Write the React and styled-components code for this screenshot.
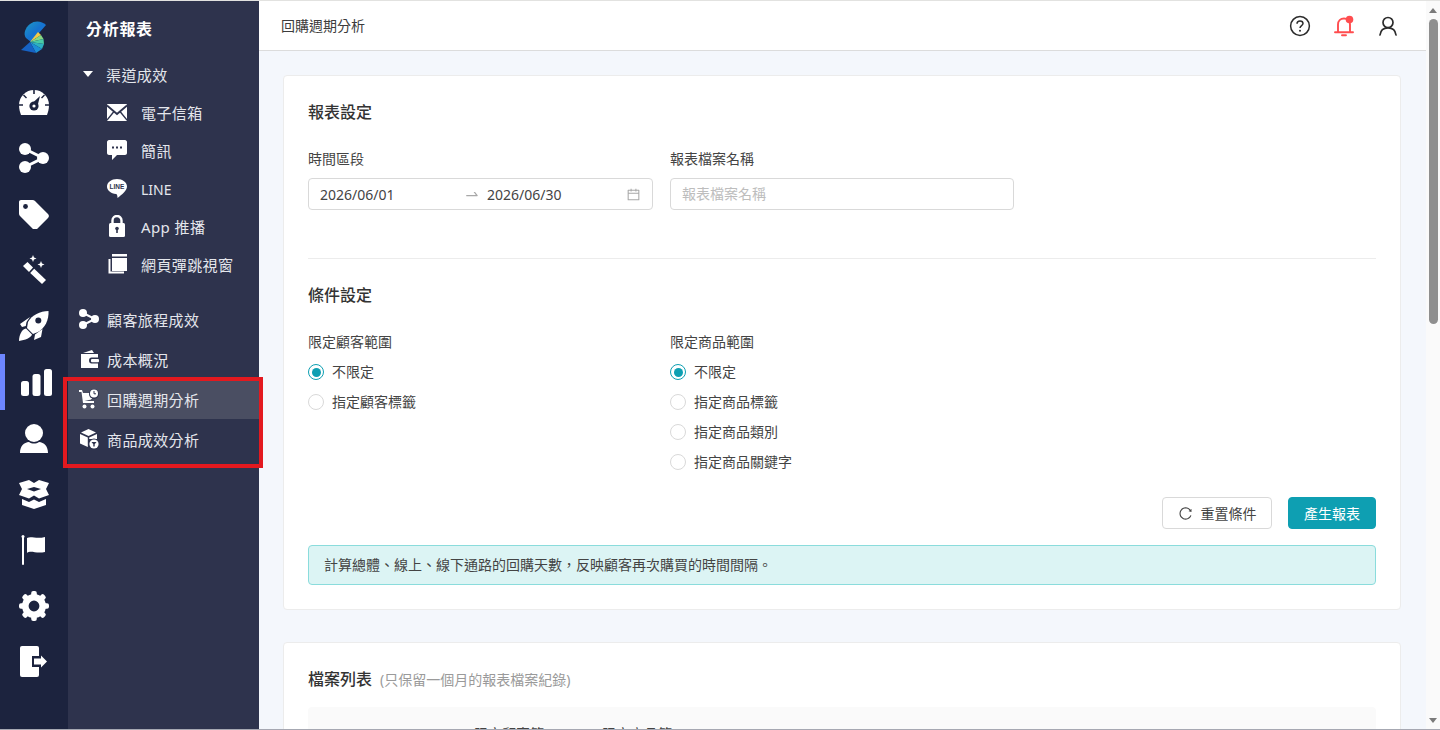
import React from "react";
import styled, { createGlobalStyle } from "styled-components";
import { AiOutlineCalendar, AiOutlineReload, AiOutlineSwapRight } from "react-icons/ai";

const GlobalStyle = createGlobalStyle`
  html, body {
    margin: 0;
    padding: 0;
    height: 100%;
    overflow: hidden;
    background: #fff;
  }
  * { box-sizing: border-box; }
  body {
    font-family: "Noto Sans", "Noto Sans CJK TC", sans-serif;
    font-size: 14px;
    color: #3c3c3c;
  }
`;

const Page = styled.div`
  height: 730px;
  display: flex;
  flex-direction: column;
  overflow: hidden;
  position: relative;
  border-top: 1px solid #e2e2e0;
  border-bottom: 1px solid #a6a8b2;
`;

const Shell = styled.div`
  flex: 1;
  min-height: 0;
  display: flex;
`;

const Rail = styled.nav`
  width: 68px;
  flex: none;
  background: #1c233e;
  display: flex;
  flex-direction: column;
  align-items: center;
  padding-top: 19px;
`;

const LogoBox = styled.div`
  height: 35px;
  margin-bottom: 19px;
  display: flex;
`;

const RailItem = styled.a`
  width: 100%;
  height: 56px;
  flex: none;
  display: flex;
  align-items: center;
  justify-content: center;
  color: #fff;
  border-left: 5px solid ${(p) => (p.$active ? "#6d86ff" : "transparent")};
  padding-right: ${(p) => (p.$active ? 0 : 5)}px;
`;

const SubNav = styled.aside`
  width: 191px;
  flex: none;
  background: #2e334d;
  color: #e4e6ec;
  font-size: 15px;
  letter-spacing: 0.4px;
`;

const SubTitle = styled.h2`
  margin: 0;
  height: 54px;
  padding-left: 18px;
  display: flex;
  align-items: center;
  color: #fff;
  font-size: 16px;
  font-weight: 700;
  letter-spacing: 0.7px;
`;

const GroupRow = styled.div`
  height: 36px;
  margin: 1px 0;
  display: flex;
  align-items: center;
  padding-left: 15px;
  gap: 13px;
`;

const Caret = styled.span`
  width: 0;
  height: 0;
  border-left: 5.5px solid transparent;
  border-right: 5.5px solid transparent;
  border-top: 6px solid #fff;
`;

const ChildList = styled.div`
  display: flex;
  flex-direction: column;
  margin-bottom: 16px;
`;

const ChildRow = styled.a`
  height: 38px;
  display: flex;
  align-items: center;
  padding-left: 39px;
  gap: 14px;
`;

const LatinLabel = styled.span`
  font-size: 14px;
  letter-spacing: 0;
  padding-top: 3px;
`;

const IconSlot = styled.span`
  width: 20px;
  flex: none;
  display: flex;
  align-items: center;
  justify-content: center;
  color: #fff;
`;

const NavRow = styled.a`
  height: 40px;
  display: flex;
  align-items: center;
  padding-left: 11px;
  gap: 8px;
  background: ${(p) => (p.$active ? "#4a4e62" : "transparent")};
`;

const Highlight = styled.div`
  position: absolute;
  left: 63px;
  top: 376px;
  width: 200px;
  height: 91px;
  border: 4px solid #e3191f;
  pointer-events: none;
`;

const Main = styled.main`
  flex: 1;
  min-width: 0;
  display: flex;
  flex-direction: column;
`;

const TopBar = styled.header`
  height: 50px;
  flex: none;
  background: #fff;
  border-bottom: 1px solid #dcdcdc;
  display: flex;
  align-items: center;
  justify-content: space-between;
  padding: 0 27px 0 22px;
  font-size: 14px;
  color: #3c3c3c;
`;

const TopTitle = styled.span`
  padding-bottom: 2px;
`;

const TopIcons = styled.div`
  display: flex;
  align-items: center;
  gap: 22px;
`;

const Content = styled.div`
  flex: 1;
  min-height: 0;
  overflow: hidden;
  background: #f4f7fc;
  padding: 24px 25px 0 24px;
  display: flex;
  flex-direction: column;
  gap: 32px;
`;

const Card = styled.section`
  flex: none;
  background: #fff;
  border: 1px solid #ececec;
  border-radius: 4px;
  padding: 24px;
`;

const SectionTitle = styled.h3`
  margin: 0;
  height: 26px;
  line-height: 24px;
  font-size: 16px;
  font-weight: 500;
  color: #333;
`;

const Hint = styled.span`
  margin-left: 8px;
  font-size: 14px;
  font-weight: 400;
  color: #9a9a9a;
`;

const FieldGrid = styled.div`
  display: grid;
  grid-template-columns: 345px 344px;
  column-gap: 17px;
  margin-top: 22px;
`;

const FieldLabel = styled.div`
  height: 22px;
  line-height: 22px;
  color: #444;
`;

const InputShell = styled.div`
  height: 32px;
  margin-top: 8px;
  border: 1px solid #d9d9d9;
  border-radius: 4px;
  background: #fff;
  display: flex;
  align-items: center;
  padding: 0 11px ${(p) => (p.$placeholder ? 2 : 0)}px;
  color: ${(p) => (p.$placeholder ? "#bdbdbd" : "#444")};
`;

const DatePart = styled.span`
  width: 144px;
`;

const DateArrow = styled.span`
  width: 22px;
  display: flex;
  align-items: center;
  color: #a8a8a8;
`;

const DateEnd = styled.span`
  flex: 1;
  padding-left: 1px;
`;

const Divider = styled.hr`
  margin: 48px 0 24px;
  border: 0;
  border-top: 1px solid #ececec;
`;

const RadioGroup = styled.div`
  margin-top: 4px;
  display: flex;
  flex-direction: column;
`;

const RadioRow = styled.label`
  height: 30px;
  display: flex;
  align-items: center;
  gap: 8px;
  color: #444;
`;

const RadioText = styled.span`
  padding-bottom: 2px;
`;

const RadioDot = styled.span`
  width: 16px;
  height: 16px;
  border-radius: 50%;
  border: 1px solid ${(p) => (p.$checked ? "#0e9fb2" : "#d9d9d9")};
  display: flex;
  align-items: center;
  justify-content: center;
  &::after {
    content: "";
    width: 9px;
    height: 9px;
    border-radius: 50%;
    background: ${(p) => (p.$checked ? "#0e9fb2" : "transparent")};
  }
`;

const ButtonRow = styled.div`
  margin-top: 20px;
  display: flex;
  justify-content: flex-end;
  gap: 16px;
`;

const Button = styled.button`
  height: 32px;
  width: ${(p) => (p.$primary ? 88 : 110)}px;
  border-radius: 4px;
  border: 1px solid ${(p) => (p.$primary ? "#0e9fb2" : "#d9d9d9")};
  background: ${(p) => (p.$primary ? "#0e9fb2" : "#fff")};
  color: ${(p) => (p.$primary ? "#fff" : "#444")};
  font: inherit;
  display: flex;
  align-items: center;
  justify-content: center;
  gap: 8px;
  padding: 0;
`;

const Notice = styled.div`
  margin-top: 16px;
  height: 40px;
  background: #dcf4f4;
  border: 1px solid #8adcdc;
  border-radius: 4px;
  display: flex;
  align-items: center;
  padding: 0 15px 2px;
  font-size: 14px;
  color: #444;
`;

const TableHead = styled.div`
  margin-top: 14px;
  background: #fafafa;
  border-radius: 4px 4px 0 0;
  display: grid;
  grid-template-columns: 166px 128px 1fr;
  padding-top: 16px;
  height: 60px;
  color: #444;
`;

const HeadCell = styled.span`
  max-width: 72px;
`;

const Scrollbar = styled.div`
  width: 14px;
  flex: none;
  background: #fafafa;
  display: flex;
  flex-direction: column;
  align-items: center;
`;

const ScrollArrow = styled.span`
  height: 18px;
  flex: none;
  display: flex;
  align-items: center;
  &::after {
    content: "";
    width: 0;
    height: 0;
    border-left: 4.5px solid transparent;
    border-right: 4.5px solid transparent;
    ${(p) =>
      p.$down
        ? "border-top: 5px solid #7a7a7a;"
        : "border-bottom: 5px solid #7a7a7a;"}
  }
`;

const ScrollThumb = styled.span`
  width: 9px;
  height: 305px;
  border-radius: 5px;
  background: #8f8f8f;
`;

const ScrollSpace = styled.span`
  flex: 1;
`;

const DARK = "#1c233e";
const MID = "#2e334d";

const LogoMark = () => (
  <svg width="26" height="35" viewBox="24 20 26 35">
    <defs>
      <linearGradient id="lg" x1="0" y1="0" x2="1" y2="1">
        <stop offset="0" stopColor="#1f9ac4" />
        <stop offset="0.5" stopColor="#1572d0" />
        <stop offset="1" stopColor="#1f7fe0" />
      </linearGradient>
    </defs>
    <path d="M49 25C45 21 38 20 33 24C28 28 26 34 29 38L34 42Z" fill="url(#lg)" />
    <path d="M33 42L41 32L44 35Z" fill="#f3cb47" />
    <path d="M33 42L44 35L46.5 39Z" fill="#86d884" />
    <path d="M33 42L46.5 39L47 44Z" fill="#4acba5" />
    <path d="M33 42L47 44L45 49Z" fill="#2db1c0" />
    <path d="M33 42L45 49L39 53Z" fill="#1d8fd6" />
    <path d="M33 42L39 53L24 50Z" fill="#1662c4" />
  </svg>
);

const GaugeIcon = () => (
  <svg width="30" height="25" viewBox="0 0 30 25">
    <path d="M15 0A15 15 0 0 1 30 15C30 19 29 22 28 25H2C1 22 0 19 0 15A15 15 0 0 1 15 0Z" fill="#fff" />
    <path d="M14.2 0H15.8V4H14.2ZM0 14.2H4V15.8H0ZM26 14.2H30V15.8H26ZM5 4.5L8 7.5L7 8.5L4 5.5ZM25 4.5L22 7.5L23 8.5L26 5.5Z" fill={DARK} />
    <circle cx="15" cy="16" r="4.6" fill={DARK} />
    <path d="M12.5 14L21 6L18 18Z" fill={DARK} />
    <circle cx="15" cy="16" r="1.6" fill="#fff" />
  </svg>
);

const ShareIcon = ({ size = 30 }) => (
  <svg width={size} height={size} viewBox="0 0 30 30">
    <path d="M6 6L24 15L6 24" fill="none" stroke="#fff" strokeWidth="3" />
    <circle cx="6" cy="6" r="6" fill="#fff" />
    <circle cx="6" cy="24" r="6" fill="#fff" />
    <circle cx="24" cy="15" r="6" fill="#fff" />
  </svg>
);

const TagIcon = () => (
  <svg width="30" height="30" viewBox="0 -1 30 30">
    <path
      d="M2 0H13.5C14.5 0 15.4 .4 16 1L29 14C30.2 15.2 30.2 16.8 29 18L18 29C16.8 30.2 15.2 30.2 14 29L1 16C.4 15.4 0 14.5 0 13.5V2C0 .9 .9 0 2 0Z"
      fill="#fff"
    />
    <circle cx="6.5" cy="6.5" r="2.4" fill={DARK} />
  </svg>
);

const WandIcon = () => (
  <svg width="30" height="30" viewBox="0 0 30 30">
    <path d="M4 11L8.5 7L14 12.5L10 17Z" fill="#fff" />
    <path d="M11.2 18L15.2 13.8L27 25L23 29Z" fill="#fff" />
    <path d="M14 0L15 2.5L17.5 3.5L15 4.5L14 7L13 4.5L10.5 3.5L13 2.5Z" fill="#fff" />
    <path d="M22 6L23 8.5L25.5 9.5L23 10.5L22 13L21 10.5L18.5 9.5L21 8.5Z" fill="#fff" />
  </svg>
);

const RocketIcon = () => (
  <svg width="30" height="30" viewBox="0 0 30 30">
    <path d="M29.5 0C21 0 13 4 9 11L8 17L14 23L19 21C26 17 30 9 29.5 0Z" fill="#fff" />
    <circle cx="19.3" cy="9.5" r="3" fill={DARK} />
    <path d="M11 6L1 13L3 16L6.8 15L7.5 11Z" fill="#fff" />
    <path d="M23.5 18L16 23.5L15 29L22 26Z" fill="#fff" />
    <path d="M0 30C0 24 3 18 7 17.5L13 23.5C12 27 6 29 0 30Z" fill="#fff" />
  </svg>
);

const BarsIcon = () => (
  <svg width="31" height="27" viewBox="0 0 31 27">
    <rect x="0" y="12" width="8" height="15" rx="2.5" fill="#fff" />
    <rect x="11.5" y="5" width="8" height="22" rx="2.5" fill="#fff" />
    <rect x="23" y="0" width="8" height="27" rx="2.5" fill="#fff" />
  </svg>
);

const UserIcon = () => (
  <svg width="28" height="29" viewBox="0 0 28 29">
    <circle cx="14" cy="9" r="9" fill="#fff" />
    <path d="M0 29C0 22 4 18.5 9 18C12 20 16 20 19 18C24 18.5 28 22 28 29Z" fill="#fff" />
  </svg>
);

const BoxIcon = () => (
  <svg width="30" height="29" viewBox="0 0 30 29">
    <path d="M0 3L10 0L15 3L20 0L30 3L27 9L30 15L20 18.5L15 15.5L10 18.5L0 15L3 9Z" fill="#fff" />
    <path d="M8 9L15 7L22 9L15 11.5Z" fill={DARK} />
    <path d="M3 19L10 22L15 19.5L20 22L27 19V25L15 29L3 25Z" fill="#fff" />
  </svg>
);

const FlagIcon = () => (
  <svg width="26" height="30" viewBox="0 0 26 30">
    <rect x="1" y="1" width="2" height="29" rx="1" fill="#fff" />
    <circle cx="2" cy="1.5" r="1.5" fill="#fff" />
    <path d="M6 3C10 0.5 15 4.5 24 2V17C15 19 10 15 6 18Z" fill="#fff" />
  </svg>
);

const GearIcon = () => (
  <svg width="30" height="30" viewBox="0 0 30 30">
    <circle cx="15" cy="15" r="8.7" fill="none" stroke="#fff" strokeWidth="6.6" />
    {[0, 45, 90, 135, 180, 225, 270, 315].map((deg) => (
      <rect key={deg} x="12.2" y="0" width="5.6" height="7" rx="2" fill="#fff" transform={`rotate(${deg} 15 15)`} />
    ))}
  </svg>
);

const ExitIcon = () => (
  <svg width="30" height="32" viewBox="0 0 30 32">
    <rect x="1" y="0" width="19" height="31" rx="2" fill="#fff" />
    <path d="M13 10H20V6L30 15.5L20 25V21H13Z" fill={DARK} />
    <path d="M15 12.5H22V9.5L28 15.5L22 21.5V18.5H15Z" fill="#fff" />
  </svg>
);

const MailIcon = () => (
  <svg width="20" height="17" viewBox="0 0 20 17">
    <rect width="20" height="17" rx="1" fill="#fff" />
    <path d="M0 1.5L10 10L20 1.5" fill="none" stroke={MID} strokeWidth="1.8" />
    <path d="M0 16L7 7.5M20 16L13 7.5" fill="none" stroke={MID} strokeWidth="1.4" />
  </svg>
);

const SmsIcon = () => (
  <svg width="20" height="20" viewBox="0 0 20 20">
    <path d="M2 0H18C19 0 20 1 20 2V13C20 14 19 15 18 15H10L5 20V15H2C1 15 0 14 0 13V2C0 1 1 0 2 0Z" fill="#fff" />
    <rect x="5" y="6.5" width="2" height="2" fill={MID} />
    <rect x="9" y="6.5" width="2" height="2" fill={MID} />
    <rect x="13" y="6.5" width="2" height="2" fill={MID} />
  </svg>
);

const LineIcon = () => (
  <svg width="20" height="19" viewBox="0 0 20 19">
    <path d="M10 0C15.5 0 20 3.3 20 7.5C20 11.5 15 15.5 10.5 19C10.5 17 10 15 9 15C4 14.6 0 11.5 0 7.5C0 3.3 4.5 0 10 0Z" fill="#fff" />
    <text x="10" y="9.8" textAnchor="middle" fontSize="6.5" fontWeight="800" fontFamily="Liberation Sans" letterSpacing="0" fill={MID}>LINE</text>
  </svg>
);

const LockIcon = () => (
  <svg width="16" height="22" viewBox="0 0 16 22">
    <path d="M3.5 9V5.5A4.5 4.5 0 0 1 12.5 5.5V9" fill="none" stroke="#fff" strokeWidth="2.4" />
    <rect x="0" y="8" width="16" height="14" rx="1.5" fill="#fff" />
    <circle cx="8" cy="13.5" r="1.8" fill={MID} />
    <rect x="7.2" y="14" width="1.6" height="4" fill={MID} />
  </svg>
);

const WindowsIcon = () => (
  <svg width="20" height="21" viewBox="0 0 20 21">
    <rect x="5" y="0" width="15" height="2.5" fill="#fff" />
    <rect x="5" y="4" width="15" height="13" fill="#fff" />
    <path d="M2.5 5V18.5H17" fill="none" stroke="#fff" strokeWidth="2" />
  </svg>
);

const WalletIcon = () => (
  <svg width="19" height="18" viewBox="0 0 19 18">
    <path d="M3 3L12 0L14 3Z" fill="#fff" />
    <path d="M1 4H18V7.5H11.5C10 7.5 9 8.5 9 10.5C9 12.5 10 13.5 11.5 13.5H18V18H1Z" fill="#fff" />
    <rect x="11" y="9" width="8" height="3.2" rx="1" fill="#fff" />
  </svg>
);

const CartIcon = () => (
  <svg width="20" height="20" viewBox="0 0 20 20">
    <path d="M0 1H3L4 4H12V10.5L5.5 12H15V14H4L2.5 3H0Z" fill="#fff" />
    <path d="M5 5H13V10L5.8 11Z" fill="#fff" />
    <circle cx="5.5" cy="17.5" r="2" fill="#fff" />
    <circle cx="13.5" cy="17.5" r="2" fill="#fff" />
    <circle cx="15" cy="5" r="5" fill={MID} />
    <circle cx="15" cy="4.5" r="4" fill="#fff" />
    <path d="M15 2V4.8H17" fill="none" stroke={MID} strokeWidth="1" />
  </svg>
);

const PackageIcon = () => (
  <svg width="19" height="20" viewBox="0 0 19 20">
    <path d="M8.5 0L16 3.5L8.5 7L1 3.5Z" fill="#fff" />
    <path d="M0 5L7.8 8.5V18L0 14.5Z" fill="#fff" />
    <path d="M9.2 8.5L17 5V10H9.2Z" fill="#fff" />
    <circle cx="14" cy="15" r="5.6" fill={MID} />
    <circle cx="14" cy="15" r="4.6" fill="#fff" />
    <path d="M11.5 13H16.5L14.7 15.3V17.5H13.3V15.3Z" fill={MID} />
  </svg>
);

const HelpIcon = () => (
  <svg width="22" height="22" viewBox="0 0 22 22">
    <circle cx="11" cy="11" r="9.4" fill="none" stroke="#2c2c2c" strokeWidth="1.5" />
    <path d="M8 8.8C8 7 9.4 6 11 6C12.7 6 14 7 14 8.6C14 10.6 11 10.8 11 13" fill="none" stroke="#2c2c2c" strokeWidth="1.5" />
    <circle cx="11" cy="15.8" r="1" fill="#2c2c2c" />
  </svg>
);

const BellIcon = () => (
  <svg width="22" height="22" viewBox="0 0 22 22">
    <path d="M5 17V9.5C5 6 7.5 3.5 11 3.5C14.5 3.5 17 6 17 9.5V17" fill="none" stroke="#ff4d4f" strokeWidth="1.9" />
    <path d="M2 17.3H20" stroke="#ff4d4f" strokeWidth="1.9" strokeLinecap="round" />
    <path d="M9 20.3H13" stroke="#ff4d4f" strokeWidth="1.9" strokeLinecap="round" />
    <circle cx="16.5" cy="4.5" r="3.8" fill="#ff4d4f" />
  </svg>
);

const PersonIcon = () => (
  <svg width="22" height="22" viewBox="0 0 22 22">
    <circle cx="11" cy="7.5" r="5" fill="none" stroke="#2c2c2c" strokeWidth="1.7" />
    <path d="M3 20C3.5 15.5 6.5 12.8 11 12.8C15.5 12.8 18.5 15.5 19 20" fill="none" stroke="#2c2c2c" strokeWidth="1.7" strokeLinecap="round" />
  </svg>
);

const railItems = [
  { key: "gauge", icon: <GaugeIcon /> },
  { key: "share", icon: <ShareIcon /> },
  { key: "tag", icon: <TagIcon /> },
  { key: "wand", icon: <WandIcon /> },
  { key: "rocket", icon: <RocketIcon /> },
  { key: "bars", icon: <BarsIcon />, active: true },
  { key: "user", icon: <UserIcon /> },
  { key: "box", icon: <BoxIcon /> },
  { key: "flag", icon: <FlagIcon /> },
  { key: "gear", icon: <GearIcon /> },
  { key: "exit", icon: <ExitIcon /> },
];

const channelItems = [
  { label: "電子信箱", icon: <MailIcon /> },
  { label: "簡訊", icon: <SmsIcon /> },
  { label: <LatinLabel>LINE</LatinLabel>, icon: <LineIcon />, key: "line" },
  { label: "App 推播", icon: <LockIcon /> },
  { label: "網頁彈跳視窗", icon: <WindowsIcon /> },
];

const navItems = [
  { label: "顧客旅程成效", icon: <ShareIcon size={20} /> },
  { label: "成本概況", icon: <WalletIcon /> },
  { label: "回購週期分析", icon: <CartIcon />, active: true },
  { label: "商品成效分析", icon: <PackageIcon /> },
];

const customerScopes = ["不限定", "指定顧客標籤"];
const productScopes = ["不限定", "指定商品標籤", "指定商品類別", "指定商品關鍵字"];

const RadioList = ({ options }) => (
  <RadioGroup>
    {options.map((text, i) => (
      <RadioRow key={text}>
        <RadioDot $checked={i === 0} />
        <RadioText>{text}</RadioText>
      </RadioRow>
    ))}
  </RadioGroup>
);

export default function App() {
  return (
    <>
      <GlobalStyle />
      <Page>
        <Shell>
          <Rail>
            <LogoBox>
              <LogoMark />
            </LogoBox>
            {railItems.map((item) => (
              <RailItem key={item.key} $active={item.active}>
                {item.icon}
              </RailItem>
            ))}
          </Rail>
          <SubNav>
            <SubTitle>分析報表</SubTitle>
            <GroupRow>
              <Caret />
              渠道成效
            </GroupRow>
            <ChildList>
              {channelItems.map((item) => (
                <ChildRow key={item.key || item.label}>
                  <IconSlot>{item.icon}</IconSlot>
                  {item.label}
                </ChildRow>
              ))}
            </ChildList>
            {navItems.map((item) => (
              <NavRow key={item.label} $active={item.active}>
                <IconSlot>{item.icon}</IconSlot>
                {item.label}
              </NavRow>
            ))}
          </SubNav>
          <Main>
            <TopBar>
              <TopTitle>回購週期分析</TopTitle>
              <TopIcons>
                <HelpIcon />
                <BellIcon />
                <PersonIcon />
              </TopIcons>
            </TopBar>
            <Content>
              <Card>
                <SectionTitle>報表設定</SectionTitle>
                <FieldGrid>
                  <div>
                    <FieldLabel>時間區段</FieldLabel>
                    <InputShell>
                      <DatePart>2026/06/01</DatePart>
                      <DateArrow>
                        <AiOutlineSwapRight size={16} />
                      </DateArrow>
                      <DateEnd>2026/06/30</DateEnd>
                      <AiOutlineCalendar size={15} color="#a8a8a8" />
                    </InputShell>
                  </div>
                  <div>
                    <FieldLabel>報表檔案名稱</FieldLabel>
                    <InputShell $placeholder>報表檔案名稱</InputShell>
                  </div>
                </FieldGrid>
                <Divider />
                <SectionTitle>條件設定</SectionTitle>
                <FieldGrid>
                  <div>
                    <FieldLabel>限定顧客範圍</FieldLabel>
                    <RadioList options={customerScopes} />
                  </div>
                  <div>
                    <FieldLabel>限定商品範圍</FieldLabel>
                    <RadioList options={productScopes} />
                  </div>
                </FieldGrid>
                <ButtonRow>
                  <Button>
                    <AiOutlineReload size={15} />
                    重置條件
                  </Button>
                  <Button $primary>產生報表</Button>
                </ButtonRow>
                <Notice>計算總體、線上、線下通路的回購天數，反映顧客再次購買的時間間隔。</Notice>
              </Card>
              <Card>
                <SectionTitle>
                  檔案列表
                  <Hint>(只保留一個月的報表檔案紀錄)</Hint>
                </SectionTitle>
                <TableHead>
                  <span />
                  <HeadCell>限定顧客範圍</HeadCell>
                  <HeadCell>限定商品範圍</HeadCell>
                </TableHead>
              </Card>
            </Content>
          </Main>
          <Scrollbar>
            <ScrollArrow />
            <ScrollThumb />
            <ScrollSpace />
            <ScrollArrow $down />
          </Scrollbar>
        </Shell>
        <Highlight />
      </Page>
    </>
  );
}
